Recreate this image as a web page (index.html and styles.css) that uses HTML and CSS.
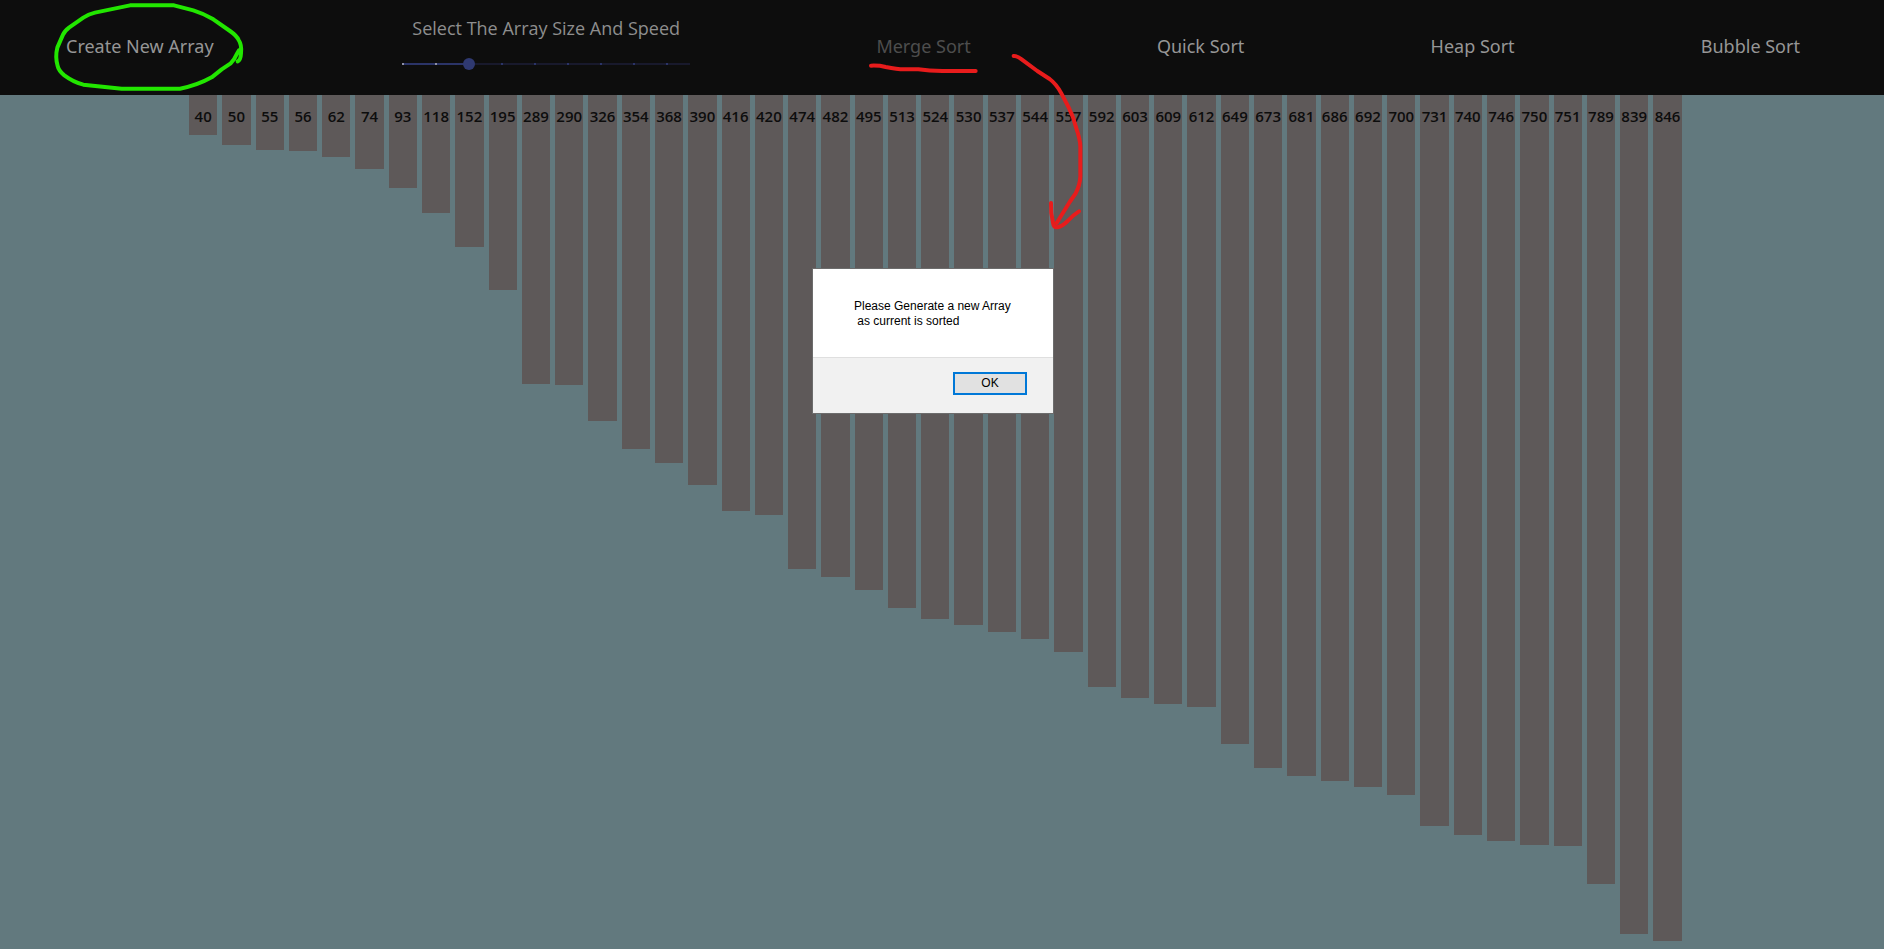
FILE: index.html
```html
<!DOCTYPE html>
<html lang="en">
<head>
<meta charset="utf-8">
<title>Sorting Visualizer</title>
<link rel="stylesheet" href="styles.css">
</head>
<body>
<header class="toolbar">
  <div class="tool create-tool">
    <button class="tool-button" type="button">Create New Array</button>
    <svg class="note note-circle" viewBox="150 0 600 285" aria-hidden="true">
      <path d="M713 184 Q722 180 723 160 Q726 135 716 120 Q710 107 690 93 L640 58 Q610 40 580 31 L522 16 H390 L285 38 Q268 42 250 53 L208 82 Q193 93 188 106 L172 143 Q165 170 173 198 Q176 212 193 226 Q220 246 250 254 L365 266 H540 Q590 257 635 232 L665 208 L692 190 Q704 178 710 163 L717 151"/>
    </svg>
  </div>
  <div class="tool size-tool">
    <label class="size-label" for="size">Select The Array Size And Speed</label>
    <input class="size-slider" id="size" type="range" min="15" max="145" step="15" value="45">
  </div>
  <div class="tool">
    <button class="tool-button" type="button" disabled>Merge Sort</button>
    <svg class="note note-arrow" viewBox="141 150 660 549" aria-hidden="true">
      <path d="M156 197 Q180 196 200 201 Q235 208 255 208 H298 Q330 213 370 213 H470"/>
      <path d="M584 168 Q593 167 608 178 L655 213 L692 237 Q712 252 727 280 L749 322 Q764 352 771 382 Q784 420 784 440 V530 Q783 555 770 580 L752 606 L713 669"/>
      <path d="M696 609 Q695 640 702 668 Q704 683 715 682 Q730 679 746 663 Q762 645 780 634"/>
    </svg>
  </div>
  <div class="tool"><button class="tool-button" type="button">Quick Sort</button></div>
  <div class="tool"><button class="tool-button" type="button">Heap Sort</button></div>
  <div class="tool"><button class="tool-button" type="button">Bubble Sort</button></div>
</header>
<main class="bars" id="bars"></main>
<div class="dialog" role="alertdialog" aria-labelledby="message">
  <p class="message" id="message">Please Generate a new Array
 as current is sorted</p>
  <div class="actions"><button class="ok" type="button">OK</button></div>
</div>
<script src="bars.js"></script>
</body>
</html>
```

FILE: styles.css
```css
* {
  box-sizing: border-box;
}

body {
  margin: 0;
  min-height: 100vh;
  background: #62797e;
  font-family: "Open Sans", "Noto Sans", sans-serif;
}

.toolbar {
  display: flex;
  justify-content: space-between;
  min-height: 95px;
  padding: 0 84px 0 66px;
  background: #0d0d0d;
}

.tool {
  position: relative;
  display: flex;
  align-items: center;
}

.create-tool {
  min-width: 150px;
}

.tool-button {
  padding: 0 0 4px;
  border: 0;
  background: none;
  color: #969696;
  font-family: "Noto Sans", "Open Sans", sans-serif;
  font-size: 18px;
  line-height: 28px;
  white-space: nowrap;
}

.tool-button:disabled {
  color: #4d4d4d;
}

.size-tool {
  flex-direction: column;
  justify-content: center;
  gap: 16px;
  width: 288px;
  padding-bottom: 11px;
}

.size-label {
  color: #8e8e8e;
  font-size: 18px;
  line-height: 28px;
  white-space: nowrap;
}

.size-slider {
  width: 300px;
  height: 12px;
  margin: 0;
  appearance: none;
  background:
    repeating-linear-gradient(90deg, #8d90a6 0 2px, transparent 2px 33px) 6px 5px / 66px 2px no-repeat,
    linear-gradient(#2b3468, #2b3468) 6px 5px / 66px 2px no-repeat,
    repeating-linear-gradient(90deg, #2b3468 0 2px, transparent 2px 33px) 6px 5px / 288px 2px no-repeat,
    linear-gradient(#18192c, #18192c) 6px 5px / 288px 2px no-repeat;
}

.size-slider::-webkit-slider-thumb {
  width: 12px;
  height: 12px;
  appearance: none;
  border-radius: 50%;
  background: #2f3971;
}

.note {
  position: absolute;
  z-index: 1;
  fill: none;
  stroke-linecap: round;
  stroke-linejoin: round;
  pointer-events: none;
}

.note-circle {
  top: 0;
  left: -16px;
  width: 200px;
  height: 95px;
  stroke: #22e600;
  stroke-width: 12px;
}

.note-arrow {
  top: 50px;
  left: -10px;
  width: 220px;
  height: 183px;
  stroke: #e81c1c;
  stroke-width: 12px;
}

.bars {
  display: flex;
  align-items: flex-start;
  gap: 5px;
  padding: 0 202px 0 189px;
}

.bar {
  display: flex;
  flex: 1 1 0;
  justify-content: center;
  min-width: 0;
  padding-top: 9px;
  background: #5e5959;
  color: #0d0d0d;
  font-size: 15px;
  font-weight: 600;
  line-height: 24px;
}

.dialog {
  position: absolute;
  top: 268px;
  left: calc(50% - 130px);
  width: 242px;
  border: 1px solid #6c6c6c;
  background: #fff;
  color: #000;
  font-family: "Liberation Sans", Arial, sans-serif;
  font-size: 12px;
}

.message {
  margin: 0;
  padding: 30px 24px 28px 41px;
  line-height: 15px;
  white-space: pre;
}

.actions {
  display: flex;
  justify-content: flex-end;
  padding: 14px 26px 18px;
  border-top: 1px solid #dfdfdf;
  background: #f1f1f1;
}

.ok {
  width: 74px;
  height: 23px;
  padding: 0 0 2px;
  border: 2px solid #0078d7;
  background: #e1e1e1;
  color: #000;
  font: inherit;
}
```

FILE: bars.js
```js
const values = [
  40, 50, 55, 56, 62, 74, 93, 118, 152, 195, 289, 290, 326, 354, 368,
  390, 416, 420, 474, 482, 495, 513, 524, 530, 537, 544, 557, 592, 603, 609,
  612, 649, 673, 681, 686, 692, 700, 731, 740, 746, 750, 751, 789, 839, 846
];

const container = document.getElementById("bars");

for (const value of values) {
  const bar = document.createElement("div");
  bar.className = "bar";
  bar.style.height = value + "px";
  bar.textContent = value;
  container.append(bar);
}
```
